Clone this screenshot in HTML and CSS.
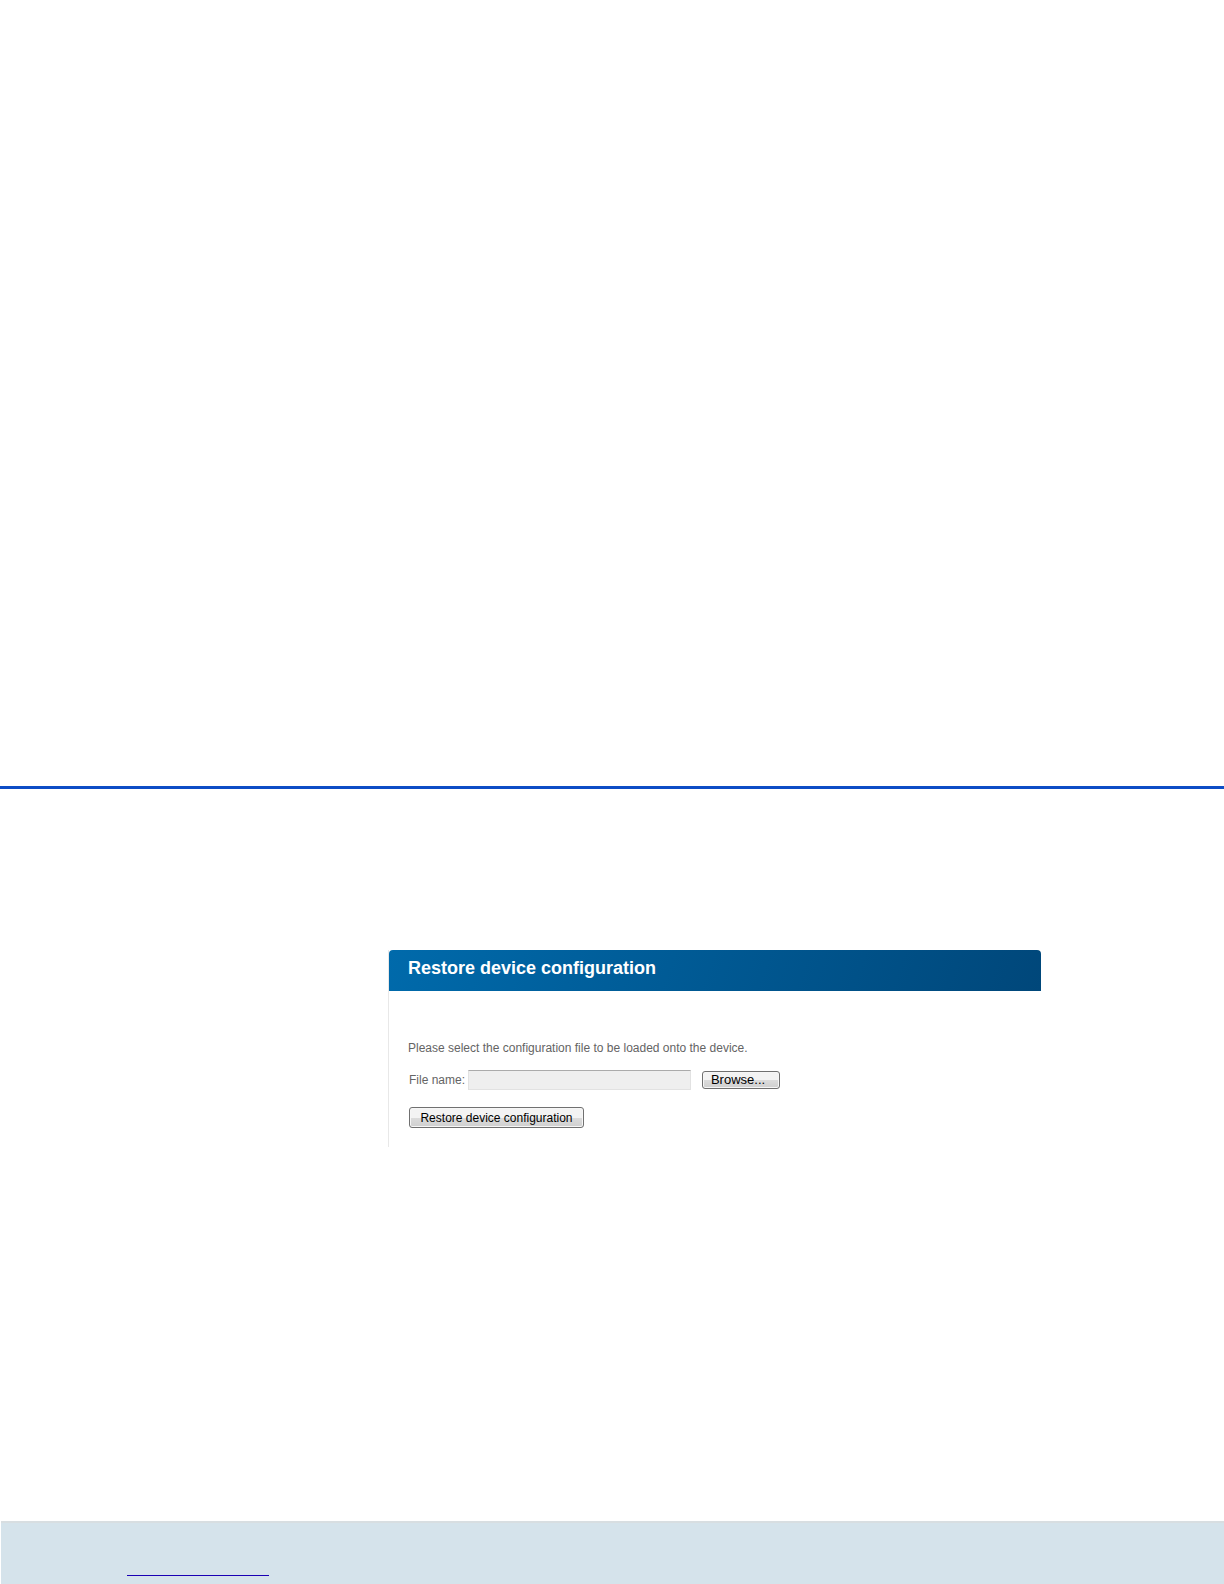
FILE: index.html
```
<!DOCTYPE html>
<html lang="en">
<head>
<meta charset="utf-8">
<meta name="viewport" content="width=device-width, initial-scale=1">
<title>Restore device configuration</title>
<link rel="stylesheet" href="styles.css">
</head>
<body>
<hr class="divider">
<main class="panel">
  <h1 class="panel-title">Restore device configuration</h1>
  <form class="panel-body">
    <p class="hint">Please select the configuration file to be loaded onto the device.</p>
    <div class="file-row">
      <label for="file-name">File name:</label>
      <input class="file-input" id="file-name" type="text" readonly>
      <button class="button browse" type="button">Browse...</button>
    </div>
    <button class="button restore" type="button">Restore device configuration</button>
  </form>
</main>
<footer class="footer">
  <div class="footer-rule"></div>
</footer>
</body>
</html>
```
FILE: styles.css
```
* {
  box-sizing: border-box;
}

body {
  display: flex;
  flex-direction: column;
  min-height: 100vh;
  margin: 0;
  padding-top: 786px;
  background: #fff;
  color: #646464;
  font: 12px/16px "Liberation Sans", Arial, sans-serif;
}

.divider {
  width: 100%;
  height: 3px;
  margin: 0 0 161px;
  border: 0;
  background: #0d4dc6;
}

.panel {
  margin: 0 183px 40px 388px;
  border-left: 1px solid #e8e8e8;
}

.panel-title {
  height: 41px;
  margin: 0;
  padding: 6px 19px 0;
  border-radius: 4px 4px 0 0;
  background: linear-gradient(110deg, #006aab, #00477a);
  color: #fff;
  font-size: 18px;
  line-height: 24px;
}

.panel-body {
  display: flex;
  flex-direction: column;
  align-items: flex-start;
  padding: 49px 19px 19px;
}

.hint {
  margin: 0 0 14px;
}

.file-row {
  display: flex;
  align-items: center;
  margin-bottom: 17px;
  padding-left: 1px;
}

.file-input {
  width: 223px;
  height: 20px;
  margin: 0 11px 0 3px;
  border: 1px solid #e2e2e2;
  border-top-color: #ababab;
  background: #efefef;
}

.button {
  padding: 0;
  border: 1px solid #707070;
  border-radius: 3px;
  background: linear-gradient(#f3f3f3 50%, #dcdcdc 50%, #cfcfcf);
  box-shadow: inset 0 0 0 1px #f6f6f6;
  color: #000;
  font-family: inherit;
}

.browse {
  width: 78px;
  height: 18px;
  padding-right: 6px;
  font-size: 13px;
  line-height: 16px;
}

.restore {
  width: 175px;
  height: 21px;
  margin-left: 1px;
  font-size: 12px;
}

.footer {
  margin: auto 0 0 1px;
  padding: 52px 126px 8px;
  border-top: 2px solid #d8dee1;
  background: #d5e3eb;
}

.footer-rule {
  width: 142px;
  height: 1px;
  background: #1a00b4;
}
```
